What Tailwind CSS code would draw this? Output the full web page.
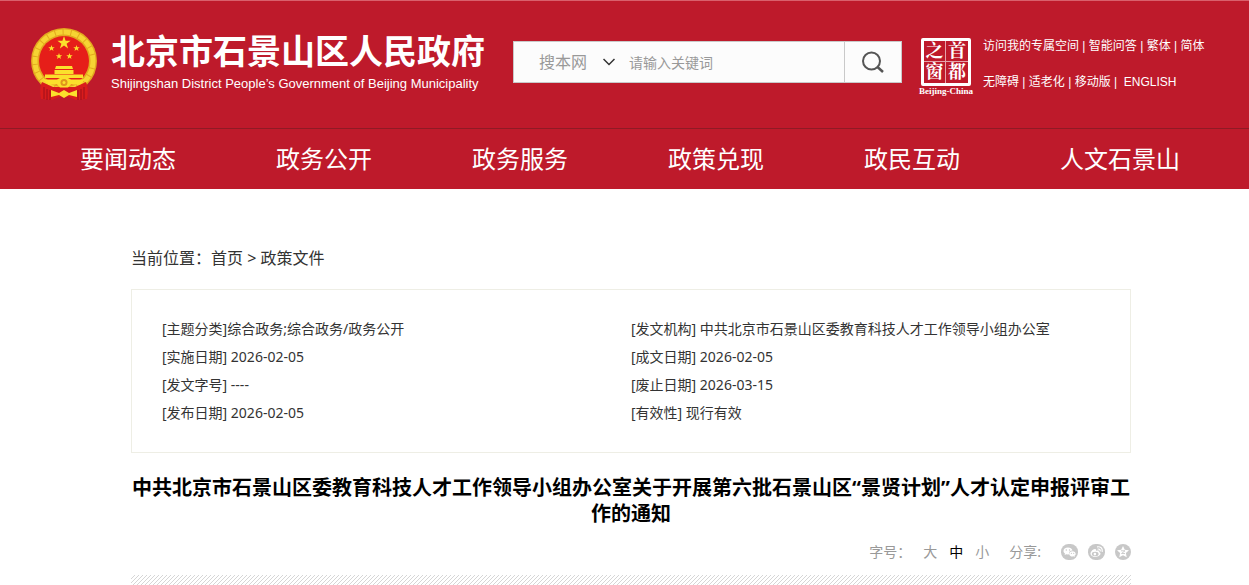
<!doctype html>
<html lang="zh-CN">
  <head>
    <title>北京市石景山区人民政府</title>
    <meta charset="utf-8" />
    <meta name="viewport" content="width=device-width, initial-scale=1.0" />
    <script src="https://cdn.jsdelivr.net/npm/@tailwindcss/browser@4"></script>
  </head>
  <body
    class="bg-white text-[#333] font-['Noto_Sans','Noto_Sans_CJK_SC',sans-serif] overflow-x-hidden"
  >
    <header class="bg-[#be1a2b] border-t border-[#d9606c] text-white">
      <!-- Logo + buscador -->
      <div class="pl-[13px]">
        <div class="max-w-[1200px] mx-auto h-[127px] flex items-start">
          <a href="#" class="w-[453px] flex shrink-0 pt-[27px]">
            <svg class="w-[67px] h-[74px] shrink-0" viewBox="0 0 67 74">
              <circle cx="33" cy="33" r="33" fill="#e3a91f" />
              <circle
                cx="33"
                cy="33"
                r="29"
                fill="none"
                stroke="#f6d433"
                stroke-width="5"
                stroke-dasharray="7 1"
              />
              <circle cx="33" cy="33" r="25" fill="#e61e19" />
              <path
                d="M11 54 Q8 60 10 71 L21 72 L33 67 L45 72 L56 71 Q58 60 55 54 L44 59 H22 Z"
                fill="#d91c1c"
              />
              <path
                d="M13 59v12M16 61v11M19 62v10M47 62v10M50 61v11M53 59v12"
                stroke="#9c0f1a"
                stroke-width="1"
              />
              <g fill="#fbe02c">
                <path
                  d="M33 8l1.600 4.700h5l-4 3 1.500 4.800-4.100-2.900-4.100 2.900 1.500-4.800-4-3h5z"
                />
                <path
                  d="M20.500 17l.8 2.300h2.400l-1.900 1.400.7 2.300-2-1.400-2 1.400.7-2.300-1.900-1.400h2.400z"
                />
                <path
                  d="M45.500 17l.8 2.300h2.400l-1.900 1.400.7 2.300-2-1.400-2 1.400.7-2.300-1.900-1.400h2.400z"
                />
                <path
                  d="M28 25l.8 2.300h2.400l-1.900 1.400.7 2.300-2-1.400-2 1.400.7-2.300-1.900-1.400h2.400z"
                />
                <path
                  d="M38.500 25l.8 2.300h2.400l-1.900 1.400.7 2.300-2-1.400-2 1.400.7-2.300-1.900-1.400h2.400z"
                />
                <path d="M25 38h16l1 3H24z" />
                <path d="M23.500 42h19v4h-19z" />
                <path d="M14 46.500h38v3.500H14z" />
                <path d="M12 51.500h14q7-5 14 0h14l-5 5h-9l-3 3h-8l-3-3h-9z" />
                <path d="M20 62l8 3 5-3 5 3 8-3v7l-8-2-5 3-5-3-8 2z" />
              </g>
              <circle cx="33" cy="54.500" r="3.500" fill="#e0951c" />
              <circle cx="33" cy="54.500" r="1.500" fill="#fbe02c" />
            </svg>
            <span class="ml-[13px] flex flex-col">
              <span
                class="text-[34px] leading-[46px] font-bold whitespace-nowrap"
                >北京市石景山区人民政府</span
              >
              <span
                class="text-[13px] leading-5 font-['Liberation_Sans',Arial,sans-serif] whitespace-nowrap"
                >Shijingshan District People’s Government of Beijing
                Municipality</span
              >
            </span>
          </a>

          <form
            class="mt-10 ml-[29px] flex-1 h-[42px] flex items-center bg-[#fcfcfc] border border-[#c9c9c9] text-[#999]"
          >
            <label class="relative shrink-0 flex items-center">
              <select
                aria-label="搜索范围"
                class="appearance-none w-[115px] pl-[25px] h-10 text-base bg-transparent outline-none"
              >
                <option>搜本网</option>
                <option>搜全市</option>
              </select>
              <svg
                class="absolute right-[14px] w-3 h-2 pointer-events-none"
                viewBox="0 0 12 8"
                fill="none"
                stroke="#333"
                stroke-width="1.500"
              >
                <path d="M.5 1l5.500 5.500L11.500 1" />
              </svg>
            </label>
            <input
              type="text"
              aria-label="关键词"
              placeholder="请输入关键词"
              class="flex-1 min-w-0 h-10 text-sm placeholder:text-[#999] outline-none"
            />
            <button
              type="submit"
              aria-label="搜索"
              class="w-[57px] h-10 shrink-0 border-l border-[#c9c9c9] flex items-center justify-center"
            >
              <svg
                class="w-6 h-6"
                viewBox="0 0 24 24"
                fill="none"
                stroke="#555"
                stroke-width="2"
              >
                <circle cx="10.500" cy="11" r="8.500" />
                <path d="M16.500 17l5.500 5" stroke-width="2.500" />
              </svg>
            </button>
          </form>

          <!-- 首都之窗 -->
          <a
            href="#"
            class="mt-[37px] ml-4 w-[56px] shrink-0 flex flex-col items-center font-['Liberation_Serif','Noto_Serif_CJK_SC','Noto_Sans_CJK_SC',serif]"
          >
            <span
              class="w-[50px] h-12 border-[3px] border-white rounded-xs grid grid-cols-2 grid-rows-2 text-[18px] leading-5 font-bold text-center"
            >
              <span class="border-r border-b border-white/60">之</span>
              <span class="border-b border-white/60">首</span>
              <span class="border-r border-white/60">窗</span>
              <span>都</span>
            </span>
            <span class="text-[9px] leading-[10px] font-bold whitespace-nowrap"
              >Beijing-China</span
            >
          </a>

          <div
            class="mt-[35px] ml-[9px] w-[248px] shrink-0 flex flex-col gap-4 text-xs leading-5 whitespace-nowrap font-['Liberation_Sans','Noto_Sans_CJK_SC',sans-serif]"
          >
            <div>
              <a href="#">访问我的专属空间</a> | <a href="#">智能问答</a> |
              <a href="#">繁体</a> | <a href="#">简体</a>
            </div>
            <div>
              <a href="#">无障碍</a> | <a href="#">适老化</a> |
              <a href="#">移动版</a> | &nbsp;<a href="#">ENGLISH</a>
            </div>
          </div>
        </div>
      </div>

      <!-- Menú principal -->
      <nav class="pl-[11px] border-t border-[#8f1a25]">
        <div
          class="max-w-[1100px] mx-auto flex justify-between text-2xl leading-[60px] whitespace-nowrap"
        >
          <a href="#">要闻动态</a>
          <a href="#">政务公开</a>
          <a href="#">政务服务</a>
          <a href="#">政策兑现</a>
          <a href="#">政民互动</a>
          <a href="#">人文石景山</a>
        </div>
      </nav>
    </header>

    <main class="pl-[13px]">
      <div class="max-w-[1000px] mx-auto pt-[57px]">
        <div class="text-base leading-6">
          当前位置：<a href="#">首页</a> &gt; <a href="#">政策文件</a>
        </div>

        <!-- Datos del documento -->
        <div
          class="mt-[19px] px-[30px] py-[25px] border border-[#eeeee5] grid grid-cols-2 text-sm leading-7"
        >
          <ul>
            <li>[主题分类]综合政务;综合政务/政务公开</li>
            <li>[实施日期] 2026-02-05</li>
            <li>[发文字号] ----</li>
            <li>[发布日期] 2026-02-05</li>
          </ul>
          <ul>
            <li>[发文机构] 中共北京市石景山区委教育科技人才工作领导小组办公室</li>
            <li>[成文日期] 2026-02-05</li>
            <li>[废止日期] 2026-03-15</li>
            <li>[有效性] 现行有效</li>
          </ul>
        </div>

        <h1
          class="mt-[22px] text-xl leading-[26px] font-bold text-black text-center"
        >
          中共北京市石景山区委教育科技人才工作领导小组办公室关于开展第六批石景山区“景贤计划”人才认定申报评审工作的通知
        </h1>

        <div
          class="mt-[13px] flex items-center justify-end text-sm leading-6 text-[#999]"
        >
          <span>字号：</span>
          <span class="ml-3 flex gap-3">
            <button type="button">大</button>
            <button type="button" class="text-black">中</button>
            <button type="button">小</button>
          </span>
          <span class="ml-5">分享:</span>
          <span class="ml-5 flex gap-[10px]">
            <a href="#" aria-label="微信">
              <svg class="w-[17px] h-4" viewBox="0 0 17 16">
                <rect width="17" height="16" rx="7.500" fill="#c8c8c8" />
                <path
                  d="M7 3.500c-2.800 0-4.500 1.500-4.500 3.500 0 1.200.6 2 1.500 2.600l-.4 1.400 1.700-.8 1.700.3 1-.3C8 7.500 9 6.500 11.500 6.500 11 4.500 9.300 3.500 7 3.500z"
                  fill="#fff"
                />
                <path
                  d="M11.500 7.200c-2 0-3.300 1.200-3.300 2.700s1.400 2.600 3.300 2.600l1-.2 1.300.7-.3-1.200c.8-.5 1.200-1.100 1.200-1.900 0-1.500-1.300-2.700-3.200-2.700z"
                  fill="#fff"
                />
                <g fill="#c8c8c8">
                  <circle cx="5.300" cy="6" r=".7" />
                  <circle cx="8.500" cy="6" r=".7" />
                  <circle cx="10.400" cy="9.300" r=".6" />
                  <circle cx="12.700" cy="9.300" r=".6" />
                </g>
              </svg>
            </a>
            <a href="#" aria-label="微博">
              <svg class="w-[17px] h-4" viewBox="0 0 17 16">
                <rect width="17" height="16" rx="7.500" fill="#c8c8c8" />
                <path
                  d="M6.800 5C4.800 5.300 2.500 7.800 2.500 9.800c0 2 2.300 3.200 4.800 3.200 3 0 5.200-1.700 5.200-3.400 0-1-.8-1.500-1.600-1.700.3-1.300-.7-1.700-2.800-.9.400-1.300-.1-2.200-1.300-2z"
                  fill="#fff"
                />
                <ellipse cx="7.200" cy="10" rx="3.400" ry="2.200" fill="#c8c8c8" />
                <circle cx="6.900" cy="10.100" r="1.300" fill="#fff" />
                <path
                  d="M9.500 2.800c3-.4 5.200 1.500 4.700 4.500M10 5c1.600-.1 2.400.7 2.200 2"
                  fill="none"
                  stroke="#fff"
                  stroke-width="1.200"
                  stroke-linecap="round"
                />
              </svg>
            </a>
            <a href="#" aria-label="QQ空间">
              <svg class="w-4 h-4" viewBox="0 0 16 16">
                <circle cx="8" cy="8" r="8" fill="#c8c8c8" />
                <path
                  d="M8 2l1.800 3.800 4.200.5-3.100 2.800.8 4.200L8 11.300l-3.700 2 .8-4.200L2 6.300l4.200-.5z"
                  fill="#fff"
                />
                <path
                  d="M6 6.800h4L6.500 9.500H10"
                  fill="none"
                  stroke="#c8c8c8"
                  stroke-width=".9"
                />
              </svg>
            </a>
          </span>
        </div>

        <svg class="mt-[11px] w-full h-[10px]">
          <pattern
            id="rayas"
            width="4"
            height="4"
            patternUnits="userSpaceOnUse"
          >
            <path d="M-1 5L5-1M-1 1L1-1M3 5L5 3" stroke="#ccc" stroke-width=".8" />
          </pattern>
          <rect width="100%" height="100%" fill="url(#rayas)" />
        </svg>
      </div>
    </main>
  </body>
</html>
